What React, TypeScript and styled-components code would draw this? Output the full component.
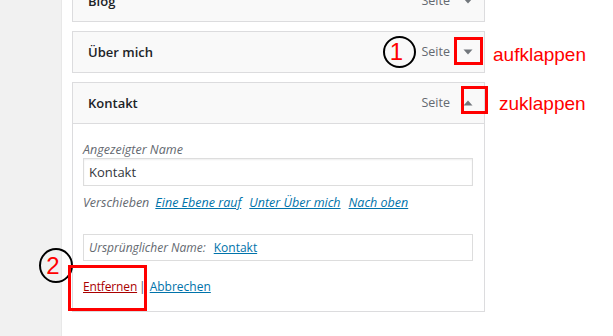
import styled, { createGlobalStyle } from "styled-components";

const GlobalStyle = createGlobalStyle`
  html, body {
    margin: 0;
    padding: 0;
    background: #fff;
  }
  body {
    font-family: "Open Sans", "Noto Sans", sans-serif;
    font-size: 13px;
    color: #1d2327;
  }
`;

const Page = styled.div`
  position: relative;
  display: flex;
  width: 613px;
  height: 336px;
  overflow: hidden;
`;

const Sidebar = styled.div`
  width: 61px;
  flex-shrink: 0;
  background: #f1f1f1;
  border-right: 1px solid #e8e8e8;
`;

const Main = styled.div`
  flex: 1;
  padding-left: 10px;
`;

const MenuList = styled.ul`
  list-style: none;
  margin: -20px 0 0;
  padding: 0;
  width: 413px;
  display: flex;
  flex-direction: column;
  gap: 9px;
`;

const MenuItem = styled.li``;

const ItemHandle = styled.div`
  display: flex;
  align-items: center;
  border: 1px solid #dcdcde;
  background: #f9f9f9;
  padding: 10px 0 10px 15px;
  line-height: 20px;
`;

const ItemTitle = styled.span`
  flex: 1;
  font-weight: 600;
  font-size: 13px;
  color: #1d2327;
`;

const ItemType = styled.span`
  font-size: 12.5px;
  color: #646970;
  margin-right: 2px;
`;

const ToggleButton = styled.button`
  width: 32px;
  height: 20px;
  padding: 0;
  border: 0;
  background: none;
  display: flex;
  align-items: center;
  justify-content: center;
`;

const ItemSettings = styled.div`
  display: flex;
  flex-direction: column;
  border: 1px solid #dcdcde;
  border-top: none;
  padding: 17px 11px 16px 10px;
`;

const FieldLabel = styled.label`
  display: block;
  font-style: italic;
  color: #646970;
  line-height: 17px;
  font-size: 12.5px;
`;

const TextInput = styled.input`
  display: block;
  box-sizing: border-box;
  width: 100%;
  height: 28px;
  margin: 0;
  border: 1px solid #ddd;
  box-shadow: inset 0 1px 2px rgba(0, 0, 0, 0.07);
  padding: 0 5px;
  font-family: "Open Sans", "Noto Sans", sans-serif;
  font-size: 13px;
  color: #32373c;
  outline: none;
`;

const MoveRow = styled.div`
  display: flex;
  gap: 8px;
  margin-top: 8px;
  line-height: 17px;
  font-style: italic;
  font-size: 12.5px;
  color: #646970;
`;

const MoveLabel = styled.span`
  margin-right: -2px;
`;

const MoveLink = styled.a`
  color: #0073aa;
  text-decoration: underline;
`;

const OriginalBox = styled.div`
  box-sizing: border-box;
  margin-top: 23px;
  height: 27px;
  border: 1px solid #ddd;
  padding: 0 5px;
  display: flex;
  align-items: center;
  gap: 8px;
  font-size: 12px;
  font-style: italic;
  color: #646970;
`;

const OriginalLink = styled.a`
  font-style: normal;
  color: #0073aa;
  text-decoration: underline;
`;

const Actions = styled.div`
  display: flex;
  margin-top: 17px;
  line-height: 17px;
  font-size: 12px;
  color: #50575e;
`;

const Separator = styled.span`
  margin: 0 4px 0 2px;
`;

const ActionLink = styled.a<{ $danger?: boolean }>`
  color: ${(p) => (p.$danger ? "#a00" : "#0073aa")};
  text-decoration: underline;
  letter-spacing: ${(p) => (p.$danger ? "-0.15px" : "0")};
`;

const Circle = styled.div<{ $x: number; $y: number; $w: number; $h: number }>`
  position: absolute;
  left: ${(p) => p.$x}px;
  top: ${(p) => p.$y}px;
  width: ${(p) => p.$w}px;
  height: ${(p) => p.$h}px;
  box-sizing: border-box;
  border: 2px solid #000;
  border-radius: 50%;
  display: flex;
  align-items: center;
  justify-content: center;
  padding-right: 6px;
  font-family: "Liberation Sans", Arial, sans-serif;
  font-size: 24px;
  color: #f00;
`;

const RedBox = styled.div<{ $x: number; $y: number; $w: number; $h: number }>`
  position: absolute;
  left: ${(p) => p.$x}px;
  top: ${(p) => p.$y}px;
  width: ${(p) => p.$w}px;
  height: ${(p) => p.$h}px;
  box-sizing: border-box;
  border: 3px solid #f00;
`;

const Note = styled.div<{ $x: number; $y: number }>`
  position: absolute;
  left: ${(p) => p.$x}px;
  top: ${(p) => p.$y}px;
  font-family: "Liberation Sans", Arial, sans-serif;
  font-size: 19px;
  line-height: 22px;
  color: #f00;
`;

const Arrow = ({ up }: { up?: boolean }) => (
  <svg width="10" height="6" viewBox="0 0 10 6">
    <polygon
      points={up ? "0.5,5.5 9.5,5.5 5,0.5" : "0.5,0.5 9.5,0.5 5,5.5"}
      fill="#72777c"
    />
  </svg>
);

const Handle = ({ title, open }: { title: string; open?: boolean }) => (
  <ItemHandle>
    <ItemTitle>{title}</ItemTitle>
    <ItemType>Seite</ItemType>
    <ToggleButton>
      <Arrow up={open} />
    </ToggleButton>
  </ItemHandle>
);

export default function App() {
  return (
    <>
      <GlobalStyle />
      <Page>
        <Sidebar />
        <Main>
          <MenuList>
            <MenuItem>
              <Handle title="Blog" />
            </MenuItem>
            <MenuItem>
              <Handle title="Über mich" />
            </MenuItem>
            <MenuItem>
              <Handle title="Kontakt" open />
              <ItemSettings>
                <FieldLabel>Angezeigter Name</FieldLabel>
                <TextInput defaultValue="Kontakt" />
                <MoveRow>
                  <MoveLabel>Verschieben</MoveLabel>
                  <MoveLink href="#">Eine Ebene rauf</MoveLink>
                  <MoveLink href="#">Unter Über mich</MoveLink>
                  <MoveLink href="#">Nach oben</MoveLink>
                </MoveRow>
                <OriginalBox>
                  Ursprünglicher Name:
                  <OriginalLink href="#">Kontakt</OriginalLink>
                </OriginalBox>
                <Actions>
                  <ActionLink $danger href="#">Entfernen</ActionLink>
                  <Separator>|</Separator>
                  <ActionLink href="#">Abbrechen</ActionLink>
                </Actions>
              </ItemSettings>
            </MenuItem>
          </MenuList>
        </Main>

        <Circle $x={383} $y={36} $w={33} $h={32}>1</Circle>
        <RedBox $x={454} $y={37} $w={29} $h={28} />
        <Note $x={493} $y={44}>aufklappen</Note>
        <RedBox $x={461} $y={86} $w={27} $h={28} />
        <Note $x={499} $y={93}>zuklappen</Note>
        <Circle $x={39} $y={248} $w={34} $h={35}>2</Circle>
        <RedBox $x={68} $y={265} $w={79} $h={46} />
      </Page>
    </>
  );
}
